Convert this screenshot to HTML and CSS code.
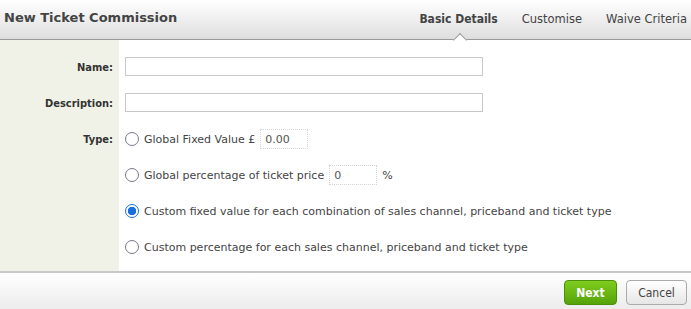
FILE: index.html
```html
<!DOCTYPE html>
<html>
<head>
<meta charset="utf-8">
<link rel="stylesheet" href="styles.css">
</head>
<body>
<div class="dialog">
  <div class="header">
    <div class="title">New Ticket Commission</div>
    <div class="tabs">
      <span class="tab active">Basic Details</span>
      <span class="tab">Customise</span>
      <span class="tab">Waive Criteria</span>
    </div>
  </div>
  <div class="body">
    <div class="row text-row">
      <label class="label">Name:</label>
      <div class="field"><input class="text" type="text"></div>
    </div>
    <div class="row text-row">
      <label class="label">Description:</label>
      <div class="field"><input class="text" type="text"></div>
    </div>
    <div class="row type-row">
      <label class="label type-label">Type:</label>
      <div class="field options">
        <div class="opt"><span class="radio"></span><span>Global Fixed Value £</span><span class="small-input">0.00</span></div>
        <div class="opt"><span class="radio"></span><span>Global percentage of ticket price</span><span class="small-input">0</span><span class="pct">%</span></div>
        <div class="opt"><span class="radio checked"></span><span>Custom fixed value for each combination of sales channel, priceband and ticket type</span></div>
        <div class="opt last"><span class="radio"></span><span>Custom percentage for each sales channel, priceband and ticket type</span></div>
      </div>
    </div>
    <div class="fill"></div>
  </div>
  <div class="footer">
    <button class="btn next">Next</button>
    <button class="btn cancel">Cancel</button>
  </div>
</div>
</body>
</html>
```
FILE: styles.css
```css
* { box-sizing: border-box; }
html, body { margin: 0; padding: 0; background: #fff; }
body {
  font-family: "DejaVu Sans", sans-serif;
  font-size: 11px;
  color: #444;
  width: 691px;
  height: 309px;
  overflow: hidden;
}
.dialog { display: flex; flex-direction: column; height: 309px; }
.header {
  height: 40px;
  flex: none;
  display: flex;
  align-items: flex-start;
  justify-content: space-between;
  background: linear-gradient(#ffffff, #dedede);
  border-bottom: 1px solid #999;
  position: relative;
}
.title {
  font-weight: bold;
  font-size: 13px;
  color: #444;
  padding: 10px 0 0 4px;
}
.tabs { display: flex; gap: 24px; padding: 12px 4px 0 0; font-size: 11.5px; }
.tab { color: #444; }
.tab.active {
  font-weight: bold;
  position: relative;
  font-family: "DejaVu Sans Condensed", "DejaVu Sans", sans-serif;
  font-size: 12px;
}
.tab.active::after {
  content: "";
  position: absolute;
  left: 36px;
  top: 23px;
  width: 9px;
  height: 9px;
  background: #fff;
  border-left: 1px solid #999;
  border-top: 1px solid #999;
  transform: rotate(45deg);
}
.body {
  flex: 1;
  display: flex;
  flex-direction: column;
  background: linear-gradient(to right, #f0f2e8 0, #f0f2e8 119px, #fff 119px);
  padding-top: 17px;
}
.row { display: flex; }
.label {
  width: 119px;
  flex: none;
  text-align: right;
  padding-right: 6px;
  font-weight: bold;
  font-family: "DejaVu Sans Condensed", "DejaVu Sans", sans-serif;
  color: #333;
}
.text-row { height: 36px; align-items: flex-start; }
.text-row .label { padding-top: 4px; }
.field { padding-left: 6px; }
.text {
  width: 358px;
  height: 19px;
  border: 1px solid #c8c8c8;
  margin: 0;
  padding: 0;
  display: block;
}
.options { display: flex; flex-direction: column; }
.opt {
  display: flex;
  align-items: center;
  height: 20px;
  margin-bottom: 16px;
  color: #444;
  white-space: nowrap;
}
.opt.last { margin-bottom: 0; }
.radio {
  width: 14px;
  height: 14px;
  border: 1px solid #7a7a8a;
  border-radius: 50%;
  background: #fff;
  margin-right: 5px;
  flex: none;
}
.radio.checked {
  border-color: #1a6fe0;
  background: radial-gradient(circle, #1a6fe0 0, #1a6fe0 4px, #fff 4.5px);
}
.type-row { align-items: flex-start; }
.type-row .label { padding-top: 4px; }
.small-input {
  width: 48px;
  height: 20px;
  border: 1px dotted #d4d4d4;
  margin-left: 5px;
  padding: 3px 0 0 4px;
  color: #555;
}
.pct { margin-left: 5px; }
.fill { flex: 1; }
.footer {
  height: 38px;
  flex: none;
  border-top: 2px solid #c8c8c8;
  background: linear-gradient(#ffffff, #ececec);
  display: flex;
  justify-content: flex-end;
  align-items: flex-start;
  padding: 7px 4px 0 0;
  gap: 9px;
}
.btn {
  font-family: "DejaVu Sans Condensed", "DejaVu Sans", sans-serif;
  height: 25px;
  border-radius: 4px;
  font-size: 12px;
  padding: 0;
  cursor: pointer;
}
.next {
  width: 53px;
  color: #fff;
  font-weight: bold;
  background: linear-gradient(#7fcc1f, #56a30a);
  border: 1px solid #4c8f0b;
}
.cancel {
  width: 61px;
  color: #444;
  background: linear-gradient(#ffffff, #e6e6e6);
  border: 1px solid #aaa;
}
```
